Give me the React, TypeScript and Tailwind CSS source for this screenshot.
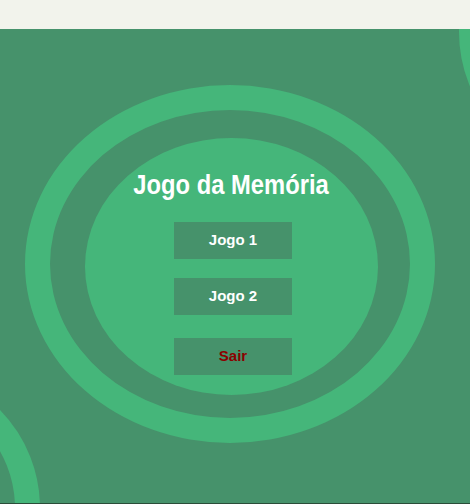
import React from "react";

export default function App() {
  const font = { fontFamily: '"Liberation Sans", Arial, sans-serif' };
  return (
    <div className="w-[470px] h-[504px] overflow-hidden bg-[#46926b]" style={font}>
      <div className="h-[29px] bg-[#f2f3ec]" />
      <div className="relative h-[474px] overflow-hidden bg-[#46926b]">
        <div className="absolute left-[459px] top-[-137px] w-[280px] h-[280px] rounded-full border-[25px] border-[#45b67a]" />
        <div className="absolute left-[-240px] top-[339px] w-[280px] h-[280px] rounded-full border-[25px] border-[#45b67a]" />
        <div className="relative ml-[25px] mt-[56px] w-[410px] h-[358px] rounded-[50%] border-[25px] border-[#45b67a] flex items-center justify-center">
          <div className="ml-[3px] mt-[4px] w-[293px] h-[257px] rounded-[50%] bg-[#45b67a] flex flex-col items-center pt-[31px]">
            <h1 className="text-[27px] leading-[32px] font-bold text-white scale-x-[0.88] whitespace-nowrap">
              Jogo da Memória
            </h1>
            <button className="mt-[21px] ml-[3px] w-[118px] h-[37px] bg-[#46926b] text-white text-[15px] font-bold">
              Jogo 1
            </button>
            <button className="mt-[19px] ml-[3px] w-[118px] h-[37px] bg-[#46926b] text-white text-[15px] font-bold">
              Jogo 2
            </button>
            <button className="mt-[23px] ml-[3px] w-[118px] h-[37px] bg-[#46926b] text-[#8b0000] text-[15px] font-bold">
              Sair
            </button>
          </div>
        </div>
      </div>
      <div className="h-[1px] bg-[#2a4d39]" />
    </div>
  );
}
